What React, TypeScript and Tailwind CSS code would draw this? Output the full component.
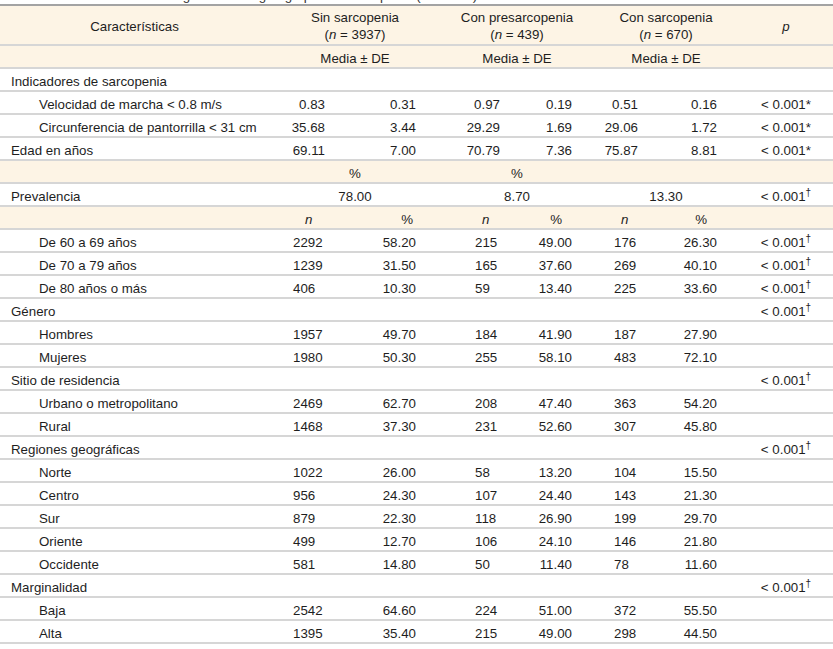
import React from 'react';

type Mark = '*' | '†';

type Row =
  | { kind: 'section'; label: string; p?: Mark }
  | { kind: 'mean'; label: string; indent: boolean; values: string[]; p: Mark }
  | { kind: 'count'; label: string; values: string[]; p?: Mark };

const GRID = 'grid grid-cols-[269px_86px_86px_76px_76px_73px_73px_94px]';
const LINE = 'border-b-2 border-[#d6d6d6]';
const CREAM = 'bg-[#fdf4e5]';

// per sub-column alignment (three groups)
const meanPad = ['pr-[30px]', 'pr-[17px]', 'pr-[28px]'];
const nPad = ['pl-[24px]', 'pl-[34px]', 'pl-[21px]'];
const dePad = ['pr-[25px]', 'pr-[21px]', 'pr-[22px]'];
const nHeadPad = ['pl-[36px]', 'pl-[41px]', 'pl-[28px]'];
const pctHeadPad = ['pr-[28px]', 'pr-[31px]', 'pr-[32px]'];

const rows: Row[] = [
  { kind: 'section', label: 'Indicadores de sarcopenia' },
  { kind: 'mean', label: 'Velocidad de marcha < 0.8 m/s', indent: true, values: ['0.83', '0.31', '0.97', '0.19', '0.51', '0.16'], p: '*' },
  { kind: 'mean', label: 'Circunferencia de pantorrilla < 31 cm', indent: true, values: ['35.68', '3.44', '29.29', '1.69', '29.06', '1.72'], p: '*' },
  { kind: 'mean', label: 'Edad en años', indent: false, values: ['69.11', '7.00', '70.79', '7.36', '75.87', '8.81'], p: '*' },
];

const countRows: Row[] = [
  { kind: 'count', label: 'De 60 a 69 años', values: ['2292', '58.20', '215', '49.00', '176', '26.30'], p: '†' },
  { kind: 'count', label: 'De 70 a 79 años', values: ['1239', '31.50', '165', '37.60', '269', '40.10'], p: '†' },
  { kind: 'count', label: 'De 80 años o más', values: ['406', '10.30', '59', '13.40', '225', '33.60'], p: '†' },
  { kind: 'section', label: 'Género', p: '†' },
  { kind: 'count', label: 'Hombres', values: ['1957', '49.70', '184', '41.90', '187', '27.90'] },
  { kind: 'count', label: 'Mujeres', values: ['1980', '50.30', '255', '58.10', '483', '72.10'] },
  { kind: 'section', label: 'Sitio de residencia', p: '†' },
  { kind: 'count', label: 'Urbano o metropolitano', values: ['2469', '62.70', '208', '47.40', '363', '54.20'] },
  { kind: 'count', label: 'Rural', values: ['1468', '37.30', '231', '52.60', '307', '45.80'] },
  { kind: 'section', label: 'Regiones geográficas', p: '†' },
  { kind: 'count', label: 'Norte', values: ['1022', '26.00', '58', '13.20', '104', '15.50'] },
  { kind: 'count', label: 'Centro', values: ['956', '24.30', '107', '24.40', '143', '21.30'] },
  { kind: 'count', label: 'Sur', values: ['879', '22.30', '118', '26.90', '199', '29.70'] },
  { kind: 'count', label: 'Oriente', values: ['499', '12.70', '106', '24.10', '146', '21.80'] },
  { kind: 'count', label: 'Occidente', values: ['581', '14.80', '50', '11.40', '78', '11.60'] },
  { kind: 'section', label: 'Marginalidad', p: '†' },
  { kind: 'count', label: 'Baja', values: ['2542', '64.60', '224', '51.00', '372', '55.50'] },
  { kind: 'count', label: 'Alta', values: ['1395', '35.40', '215', '49.00', '298', '44.50'] },
];

function PValue({ mark }: { mark?: Mark }) {
  if (!mark) return <div />;
  return (
    <div className="text-center">
      &lt; 0.001{mark === '*' ? '*' : <sup className="text-[10px]">†</sup>}
    </div>
  );
}

function BodyRow({ row }: { row: Row }) {
  if (row.kind === 'section') {
    return (
      <div className={`${GRID} h-[23px] items-center pt-[3px] ${LINE}`}>
        <div className="col-span-7 pl-[11px]">{row.label}</div>
        <PValue mark={row.p} />
      </div>
    );
  }
  const isMean = row.kind === 'mean';
  const indent = row.kind === 'mean' ? row.indent : true;
  return (
    <div className={`${GRID} h-[23px] items-center pt-[3px] ${LINE}`}>
      <div className={indent ? 'pl-[39px]' : 'pl-[11px]'}>{row.label}</div>
      {row.values.map((v, i) => {
        const g = Math.floor(i / 2);
        const first = i % 2 === 0;
        const cls = first ? (isMean ? `text-right ${meanPad[g]}` : `text-left ${nPad[g]}`) : `text-right ${dePad[g]}`;
        return (
          <div key={i} className={cls}>
            {v}
          </div>
        );
      })}
      <PValue mark={row.p} />
    </div>
  );
}

export default function App() {
  return (
    <div className="w-[833px] h-[649px] overflow-hidden bg-white text-[13.3px] text-[#1e1e1e] font-['Liberation_Sans',Arial,sans-serif]">
      {/* caption above the table, only its descenders are visible */}
      <div className="h-[4px] overflow-hidden">
        <div className="-mt-[12px] leading-[15px] pl-[40px] text-[#333]">
          Tabla 1. Características generales según grupos de sarcopenia (n = 5046)
        </div>
      </div>
      <div className="border-t-2 border-[#a3a3a3]">
        {/* header */}
        <div className={`${GRID} h-[40px] items-center pt-[2px] ${CREAM} ${LINE} leading-[17px]`}>
          <div className="text-center">Características</div>
          <div className="col-span-2 text-center">
            Sin sarcopenia
            <br />(<i>n</i> = 3937)
          </div>
          <div className="col-span-2 text-center">
            Con presarcopenia
            <br />(<i>n</i> = 439)
          </div>
          <div className="col-span-2 text-center">
            Con sarcopenia
            <br />(<i>n</i> = 670)
          </div>
          <div className="text-center italic">p</div>
        </div>
        <div className={`${GRID} h-[23px] items-center pt-[3px] ${CREAM} ${LINE}`}>
          <div />
          <div className="col-span-2 text-center">Media ± DE</div>
          <div className="col-span-2 text-center">Media ± DE</div>
          <div className="col-span-2 text-center">Media ± DE</div>
          <div />
        </div>

        {rows.map((r, i) => (
          <BodyRow key={i} row={r} />
        ))}

        <div className={`${GRID} h-[23px] items-center pt-[3px] ${CREAM} ${LINE}`}>
          <div />
          <div className="col-span-2 text-center">%</div>
          <div className="col-span-2 text-center">%</div>
          <div className="col-span-2" />
          <div />
        </div>
        <div className={`${GRID} h-[23px] items-center pt-[3px] ${LINE}`}>
          <div className="pl-[11px]">Prevalencia</div>
          <div className="col-span-2 text-center">78.00</div>
          <div className="col-span-2 text-center">8.70</div>
          <div className="col-span-2 text-center">13.30</div>
          <PValue mark="†" />
        </div>
        <div className={`${GRID} h-[23px] items-center pt-[3px] ${CREAM} ${LINE}`}>
          <div />
          {[0, 1, 2].map((g) => (
            <React.Fragment key={g}>
              <div className={`italic ${nHeadPad[g]}`}>n</div>
              <div className={`text-right ${pctHeadPad[g]}`}>%</div>
            </React.Fragment>
          ))}
          <div />
        </div>

        {countRows.map((r, i) => (
          <BodyRow key={i} row={r} />
        ))}
      </div>
    </div>
  );
}
